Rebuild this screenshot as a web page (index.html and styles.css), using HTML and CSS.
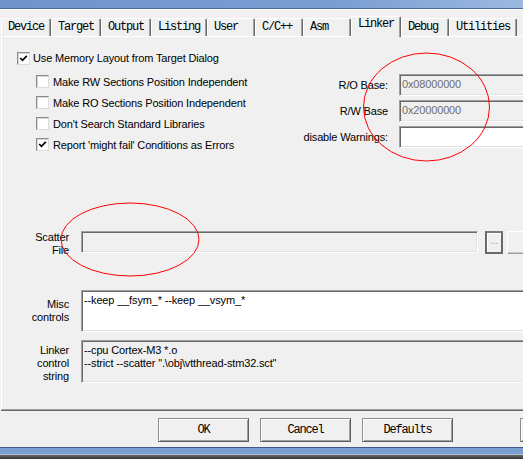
FILE: index.html
```html
<!DOCTYPE html>
<html>
<head>
<meta charset="utf-8">
<title>Options for Target</title>
<link rel="stylesheet" href="styles.css">
</head>
<body>
<div class="window">
  <div class="titlebar"></div>
  <div class="tabs">
    <div class="tab">Device</div>
    <div class="tab">Target</div>
    <div class="tab">Output</div>
    <div class="tab">Listing</div>
    <div class="tab">User</div>
    <div class="tab">C/C++</div>
    <div class="tab">Asm</div>
    <div class="tab active">Linker</div>
    <div class="tab">Debug</div>
    <div class="tab">Utilities</div>
  </div>
  <div class="panel">
    <div class="upper">
      <div class="checks">
        <div class="check main"><span class="box"><svg class="tick" viewBox="0 0 9 9"><polyline points="1.2,4 3.5,6.3 7.8,1.8"/></svg></span><span>Use Memory Layout from Target Dialog</span></div>
        <div class="check sub"><span class="box"></span><span>Make RW Sections Position Independent</span></div>
        <div class="check sub"><span class="box"></span><span>Make RO Sections Position Independent</span></div>
        <div class="check sub"><span class="box"></span><span>Don't Search Standard Libraries</span></div>
        <div class="check sub"><span class="box"><svg class="tick" viewBox="0 0 9 9"><polyline points="1.2,4 3.5,6.3 7.8,1.8"/></svg></span><span>Report 'might fail' Conditions as Errors</span></div>
      </div>
      <div class="bases">
        <span class="lbl">R/O Base:</span><div class="field dim">0x08000000</div>
        <span class="lbl">R/W Base</span><div class="field dim">0x20000000</div>
        <span class="lbl">disable Warnings:</span><div class="field white"></div>
      </div>
    </div>
    <div class="lower">
      <div class="frow scatter-row">
        <div class="lbl2 top">Scatter<br>File</div>
        <div class="field scatter"></div>
        <div class="browse">...</div>
        <div class="edit-btn"></div>
      </div>
      <div class="frow misc-row">
        <div class="lbl2">Misc<br>controls</div>
        <div class="field white wide misc">--keep __fsym_* --keep __vsym_*</div>
      </div>
      <div class="frow ctrl-row">
        <div class="lbl2 ctrl-lbl">Linker<br>control<br>string</div>
        <div class="field wide ctrl">--cpu Cortex-M3 *.o<br>--strict --scatter ".\obj\vtthread-stm32.sct"</div>
      </div>
    </div>
  </div>
  <div class="buttons">
    <div class="btn">OK</div>
    <div class="btn">Cancel</div>
    <div class="btn">Defaults</div>
    <div class="btn far"></div>
  </div>
  <div class="taskbar"></div>
</div>
<svg class="marks" width="523" height="459" viewBox="0 0 523 459">
  <ellipse cx="426.5" cy="107" rx="63" ry="54"/>
  <ellipse cx="130" cy="239.5" rx="69" ry="36.5"/>
</svg>
</body>
</html>
```
FILE: styles.css
```css
* { box-sizing: border-box; }
html, body { margin: 0; padding: 0; }
body {
  width: 523px;
  height: 459px;
  overflow: hidden;
  position: relative;
  background: #f0f0f0;
  color: #000;
  font-family: "Liberation Sans", Arial, sans-serif;
  font-size: 11px;
  letter-spacing: -0.15px;
}
.window {
  width: 560px;
  display: flex;
  flex-direction: column;
}
.titlebar {
  height: 9px;
  background: linear-gradient(to right, #6f93cc, #7b9dd2 60%, #a3bee4);
  border-bottom: 1px solid #4b6a96;
  box-shadow: 0 1px 0 #ffffff;
}
.tabs {
  display: flex;
  align-items: flex-end;
  height: 27px;
  padding-left: 1px;
  position: relative;
  z-index: 1;
  font-family: "Liberation Mono", "Courier New", monospace;
  font-size: 12px;
  letter-spacing: -1.2px;
}
.tab {
  height: 18px;
  min-width: 48px;
  padding: 0 6px;
  line-height: 17px;
  white-space: nowrap;
  background: #f0f0f0;
  border-top: 1px solid #ffffff;
  border-left: 1px solid #ffffff;
  border-right: 1px solid #696969;
  box-shadow: inset -1px 0 0 #a0a0a0;
  border-radius: 2px 2px 0 0;
}
.tab.active {
  height: 21px;
  min-width: 49px;
  margin-bottom: -1px;
  line-height: 15px;
}
.panel {
  margin-left: 1px;
  width: 560px;
  height: 374px;
  border-top: 1px solid #ffffff;
  border-left: 1px solid #ffffff;
  border-bottom: 1px solid #a0a0a0;
  box-shadow: 0 1px 0 #696969;
  padding: 11px 0 0 15px;
}
.upper {
  display: flex;
  align-items: flex-start;
}
.checks {
  width: 280px;
  display: flex;
  flex-direction: column;
}
.check {
  display: flex;
  align-items: center;
  height: 21px;
  gap: 3px;
  white-space: nowrap;
}
.check.main { margin-bottom: 3px; height: 20px; }
.check.sub { margin-left: 19px; gap: 4px; }
.box {
  flex: none;
  width: 13px;
  height: 13px;
  background: #ffffff;
  border: 1px solid;
  border-color: #8a8a8a #dcdcdc #dcdcdc #8a8a8a;
  box-shadow: inset 1px 1px 0 #d8d8d8;
  display: flex;
  align-items: center;
  justify-content: center;
}
.tick {
  width: 9px;
  height: 9px;
  fill: none;
  stroke: #000;
  stroke-width: 1.7;
}
.bases {
  margin-top: 26px;
  display: grid;
  grid-template-columns: 91px 140px;
  column-gap: 11px;
  row-gap: 4px;
  align-items: center;
}
.lbl {
  text-align: right;
  white-space: nowrap;
}
.field {
  height: 22px;
  padding: 2px 2px;
  line-height: 15px;
  white-space: nowrap;
  background: #f0f0f0;
  border: 1px solid;
  border-color: #a0a0a0 #ffffff #ffffff #a0a0a0;
  box-shadow: inset 1px 1px 0 #696969, inset -1px -1px 0 #e3e3e3;
}
.field.white { background: #ffffff; }
.field.dim { color: #6d6d6d; }
.lower {
  margin-top: 76px;
  display: flex;
  flex-direction: column;
}
.frow {
  display: flex;
  align-items: center;
}
.lbl2 {
  width: 52px;
  margin-right: 12px;
  text-align: right;
  line-height: 13px;
  flex: none;
}
.lbl2.top { align-self: flex-start; }
.ctrl-lbl { padding-top: 3px; }
.scatter-row { height: 23px; }
.field.scatter {
  width: 397px;
  align-self: flex-start;
}
.browse {
  width: 18px;
  height: 23px;
  margin-left: 7px;
  border: 2px solid #696969;
  border-top-color: #7a7a7a;
  box-shadow: inset 1px 1px 0 #ffffff;
  color: #a0a0a0;
  font-size: 10px;
  line-height: 16px;
  text-align: center;
  letter-spacing: -0.5px;
}
.edit-btn {
  width: 20px;
  height: 23px;
  margin-left: 4px;
  border: 1px solid;
  border-color: #ffffff #a0a0a0 #a0a0a0 #ffffff;
  box-shadow: inset -1px -1px 0 #c8c8c8;
}
.misc-row { margin-top: 36px; }
.ctrl-row { margin-top: 8px; }
.field.wide {
  width: 460px;
  padding: 3px 2px;
  line-height: 13px;
}
.field.misc { height: 42px; }
.field.ctrl { height: 43px; }
.buttons {
  display: flex;
  gap: 11px;
  padding-left: 158px;
  margin-top: 8px;
}
.btn {
  width: 91px;
  height: 24px;
  flex: none;
  text-align: center;
  line-height: 22px;
  font-family: "Liberation Mono", "Courier New", monospace;
  font-size: 12px;
  letter-spacing: -1.2px;
  border: 1px solid;
  border-color: #8c8c8c #5f5f5f #5f5f5f #8c8c8c;
  box-shadow: inset 1px 1px 0 #ffffff, inset -1px -1px 0 #a0a0a0;
}
.btn.far { margin-left: 56px; }
.taskbar {
  margin-top: 5px;
  height: 12px;
  background: linear-gradient(to bottom, #3d5a86 0, #3d5a86 1px, #7a9dd2 1px, #7a9dd2 7px, #b4bfcc 7px, #b4bfcc 8px, #6a6a6a 8px, #333333 12px);
}
.marks {
  position: absolute;
  left: 0;
  top: 0;
  pointer-events: none;
  fill: none;
  stroke: #ff0000;
  stroke-width: 1;
}
```
